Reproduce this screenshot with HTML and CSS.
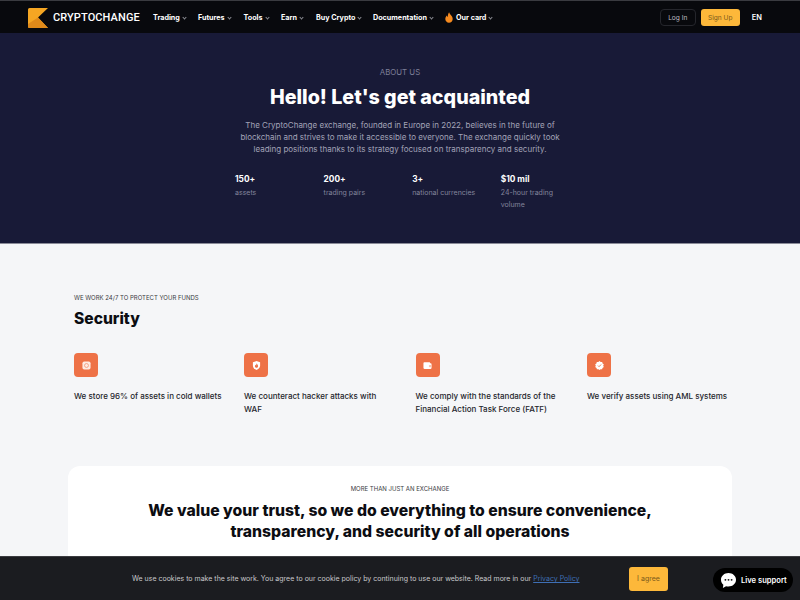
FILE: index.html
```html
<!DOCTYPE html>
<html lang="en">
<head>
<meta charset="utf-8">
<title>About us - CryptoChange</title>
<link rel="stylesheet" href="styles.css">
</head>
<body>
<header class="header">
  <a class="brand" href="#">
    <svg class="brand-logo" viewBox="0 0 20 20" aria-hidden="true">
      <path d="M0 1.500Q0 0 1.500 0H20L10 9.500L20 20H1.500Q0 20 0 18.500Z" fill="#f5a623"/>
      <path d="M0 18.500V16L10 9.500L20 20H1.500Q0 20 0 18.500Z" fill="#e08a1a"/>
    </svg>
    <span class="brand-name">CRYPTOCHANGE</span>
  </a>
  <nav class="nav">
    <a class="nav-item trading" href="#">Trading <span class="caret"></span></a>
    <a class="nav-item futures" href="#">Futures <span class="caret"></span></a>
    <a class="nav-item tools" href="#">Tools <span class="caret"></span></a>
    <a class="nav-item earn" href="#">Earn <span class="caret"></span></a>
    <a class="nav-item buy" href="#">Buy Crypto <span class="caret"></span></a>
    <a class="nav-item docs" href="#">Documentation <span class="caret"></span></a>
    <a class="nav-item" href="#">
      <svg class="flame" viewBox="0 0 10 13" aria-hidden="true"><path d="M5.2 0C5.6 2.4 9.6 4.600 9.600 8.300C9.600 11 7.600 13 5 13C2.400 13 .4 11 .4 8.400C.4 6.400 1.500 5 2.500 4.100C2.600 5.200 3 5.800 3.600 6C3.300 3.800 4 1.600 5.200 0Z" fill="#f58a1f"/></svg>
      Our card <span class="caret"></span>
    </a>
  </nav>
  <div class="header-actions">
    <a class="btn-login" href="#">Log In</a>
    <a class="btn-signup" href="#">Sign Up</a>
    <a class="lang" href="#">EN</a>
  </div>
</header>

<section class="hero">
  <p class="hero-eyebrow">ABOUT US</p>
  <h1 class="hero-title">Hello! Let's get acquainted</h1>
  <p class="hero-text">The CryptoChange exchange, founded in Europe in 2022, believes in the future of blockchain and strives to make it accessible to everyone. The exchange quickly took leading positions thanks to its strategy focused on transparency and security.</p>
  <div class="stats">
    <div class="stat"><div class="stat-value">150+</div><div class="stat-label">assets</div></div>
    <div class="stat"><div class="stat-value">200+</div><div class="stat-label">trading pairs</div></div>
    <div class="stat"><div class="stat-value">3+</div><div class="stat-label">national currencies</div></div>
    <div class="stat"><div class="stat-value">$10 mil</div><div class="stat-label">24-hour trading volume</div></div>
  </div>
</section>

<main class="main">
  <section class="security">
    <p class="eyebrow">WE WORK 24/7 TO PROTECT YOUR FUNDS</p>
    <h2 class="security-title">Security</h2>
    <div class="features">
      <div class="feature">
        <span class="feature-icon"><svg viewBox="0 0 10 10" aria-hidden="true"><rect x=".5" y=".5" width="9" height="9" rx="2" fill="#fff" fill-opacity=".85"/><circle cx="5" cy="5" r="2.200" fill="none" stroke="#ee7247" stroke-opacity=".6"/></svg></span>
        <p class="feature-text">We store 96% of assets in cold wallets</p>
      </div>
      <div class="feature">
        <span class="feature-icon"><svg viewBox="0 0 10 10" aria-hidden="true"><path d="M5 0L9 1.400V5C9 7.600 7 9.200 5 10C3 9.200 1 7.600 1 5V1.400Z" fill="#fff"/><path d="M5.200 2.600C5.400 3.800 6.800 4.400 6.800 5.800C6.800 6.800 6 7.500 5 7.500C4 7.500 3.200 6.800 3.200 5.800C3.200 5 3.700 4.500 4.100 4.200C4.200 4.700 4.400 4.900 4.700 5C4.600 4.100 4.800 3.300 5.200 2.600Z" fill="#ee7247"/></svg></span>
        <p class="feature-text">We counteract hacker attacks with WAF</p>
      </div>
      <div class="feature">
        <span class="feature-icon"><svg viewBox="0 0 10 10" aria-hidden="true"><path d="M1.500 1.500H7.500L8 2.600H8.500A1 1 0 0 1 9.500 3.600V7.500A1.500 1.500 0 0 1 8 9H2A1.500 1.500 0 0 1 .5 7.500V2.500A1 1 0 0 1 1.500 1.500Z" fill="#fff"/><rect x="6.500" y="4.500" width="3" height="2.400" rx="1" fill="#f8c4b0"/></svg></span>
        <p class="feature-text">We comply with the standards of the Financial Action Task Force (FATF)</p>
      </div>
      <div class="feature">
        <span class="feature-icon"><svg viewBox="0 0 10 10" aria-hidden="true"><path d="M5 0L6.300 1.100L8 1L8.400 2.700L9.800 3.700L9.100 5.300L9.800 6.800L8.300 7.700L7.900 9.300L6.200 9.100L5 10L3.800 9.100L2.100 9.300L1.700 7.700L.2 6.800L.9 5.300L.2 3.700L1.600 2.700L2 1L3.700 1.100Z" fill="#fff"/><path d="M3.300 5.100L4.500 6.300L6.800 3.900" fill="none" stroke="#ee7247" stroke-width="1"/></svg></span>
        <p class="feature-text">We verify assets using AML systems</p>
      </div>
    </div>
  </section>

  <section class="trust">
    <p class="eyebrow trust-eyebrow">MORE THAN JUST AN EXCHANGE</p>
    <h2 class="trust-title">We value your trust, so we do everything to ensure convenience, transparency, and security of all operations</h2>
  </section>
</main>

<div class="cookie">
  <p class="cookie-text">We use cookies to make the site work. You agree to our cookie policy by continuing to use our website. Read more in our <a class="cookie-link" href="#">Privacy Policy</a></p>
  <button class="cookie-btn" type="button">I agree</button>
</div>

<a class="support" href="#">
  <svg class="support-icon" viewBox="0 0 16 16" aria-hidden="true">
    <path d="M8 0C12.400 0 16 3.100 16 7.200C16 11.300 12.400 14.400 8 14.400C7.100 14.400 6.200 14.300 5.400 14L2 16L2.500 12.600C.9 11.200 0 9.300 0 7.200C0 3.100 3.600 0 8 0Z" fill="#fff"/>
    <circle cx="4.700" cy="7.300" r="1" fill="#111"/><circle cx="8" cy="7.300" r="1" fill="#111"/><circle cx="11.300" cy="7.300" r="1" fill="#111"/>
  </svg>
  Live support
</a>
</body>
</html>
```

FILE: styles.css
```css
* { box-sizing: border-box; }
html, body { margin: 0; height: 100%; overflow: hidden; }
body { font-family: Inter, "Liberation Sans", sans-serif; background: #f5f6f8; color: #0c0d12; }
a { color: inherit; text-decoration: none; }
p, h1, h2 { margin: 0; }

.header { height: 33px; display: flex; align-items: center; padding: 1px 0 0 28px; background: #08090d; border-top: 1px solid #3a3b40; color: #fff; }
.brand { display: flex; align-items: center; gap: 5px; width: 125px; flex: none; }
.brand-logo { width: 20px; height: 20px; flex: none; }
.brand-name { font: 500 11px/1 Roboto, sans-serif; letter-spacing: .1px; white-space: nowrap; }
.nav { display: flex; align-items: center; font-size: 7.200px; font-weight: 700; white-space: nowrap; }
.nav-item { display: flex; align-items: center; gap: 3px; }
.trading { width: 45px; }
.futures { width: 45.500px; }
.tools { width: 37.500px; }
.earn { width: 35px; }
.buy { width: 57px; }
.docs { width: 72px; }
.caret { width: 3px; height: 3px; margin-top: -1px; border-right: 1px solid #8b8c92; border-bottom: 1px solid #8b8c92; transform: rotate(45deg); }
.flame { width: 8px; height: 11px; }
.header-actions { margin-left: auto; display: flex; align-items: center; padding-right: 38px; font-size: 6.600px; }
.btn-login { width: 36px; height: 17px; margin-right: 5px; display: flex; align-items: center; justify-content: center; border: 1px solid #25262c; border-radius: 4px; color: #bdbdc2; }
.btn-signup { width: 39px; height: 17px; margin-right: 12px; display: flex; align-items: center; justify-content: center; border-radius: 3px; background: #fdb83a; color: #7c5a1a; }
.lang { font-size: 7.500px; font-weight: 600; }

.hero { height: 211px; padding-top: 34px; background: #181a37; border-bottom: 1px solid #8a8b98; display: flex; flex-direction: column; align-items: center; }
.hero-eyebrow { font-size: 7.800px; line-height: 11px; color: #7d7f97; }
.hero-title { margin-top: 6px; font-size: 19.700px; line-height: 26px; font-weight: 800; color: #fff; white-space: nowrap; }
.hero-text { margin-top: 9px; width: 335px; font-size: 8px; line-height: 12px; text-align: center; color: #a3a4b8; }
.stats { margin: 18px 0 0 24px; width: 354px; display: grid; grid-template-columns: repeat(4, 88.600px); }
.stat-value { font-size: 8.300px; line-height: 12px; font-weight: 700; color: #fff; }
.stat-label { margin-top: 2px; width: 66px; font-size: 7px; line-height: 12px; color: #83859c; }
.stat:nth-child(3) .stat-label { width: auto; white-space: nowrap; }

.main { padding-top: 49px; }
.security { padding-left: 74px; }
.eyebrow { font-size: 6px; line-height: 9px; color: #3a3b42; }
.security-title { margin-top: 5px; font-size: 15.600px; line-height: 24px; font-weight: 800; }
.features { margin-top: 22px; display: grid; grid-template-columns: 170px 171.500px 171.500px 1fr; height: 113px; }
.feature { width: 145px; }
.feature:nth-child(3) { width: 150px; }
.feature-icon { width: 24px; height: 24px; display: flex; align-items: center; justify-content: center; border-radius: 4px; background: #ee7247; }
.feature-icon svg { width: 9px; height: 9px; }
.feature-text { margin-top: 13px; font-size: 8px; line-height: 13px; font-weight: 500; color: #24252b; }
.feature:first-child .feature-text, .feature:last-child .feature-text { white-space: nowrap; }

.trust { margin: 0 68px; height: 134px; padding-top: 18px; background: #fff; border-radius: 12px 12px 0 0; text-align: center; }
.trust-eyebrow { line-height: 9px; }
.trust-title { margin: 7px auto 0; width: 520px; font-size: 15.750px; line-height: 21px; font-weight: 800; }

.cookie { position: fixed; left: 0; right: 0; bottom: 0; height: 44px; padding-left: 132px; display: flex; align-items: center; background: #1b1c20; border-top: 1px solid #3b3c40; }
.cookie-text { width: 497px; flex: none; font-size: 7px; color: #c9c9cc; white-space: nowrap; }
.cookie-link { color: #3f6fb5; text-decoration: underline; }
.cookie-btn { width: 39px; height: 24px; padding: 0; border: 0; border-radius: 3px; background: #fdb83a; color: #7c5a1a; font: 400 7px Inter, sans-serif; }
.support { position: fixed; left: 713px; top: 568px; width: 80px; height: 24px; padding-left: 8px; display: flex; align-items: center; gap: 5px; border-radius: 12px; background: #000; color: #fff; font-size: 7.600px; font-weight: 600; white-space: nowrap; }
.support-icon { width: 15px; height: 15px; flex: none; }
```
